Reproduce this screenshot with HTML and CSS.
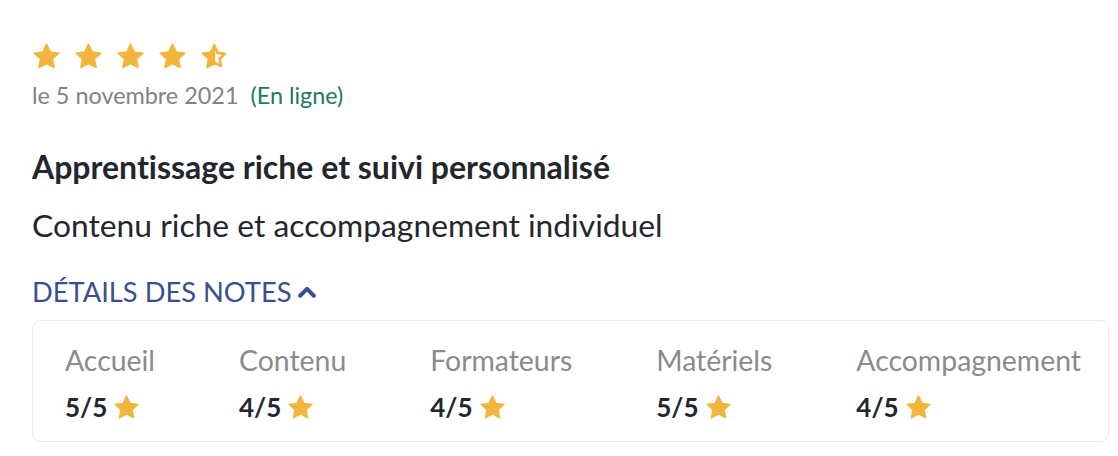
FILE: index.html
```html
<!DOCTYPE html>
<html lang="fr">
<head>
<meta charset="utf-8">
<link rel="stylesheet" href="styles.css">
</head>
<body>
<div class="review">
  <div class="stars">
    <svg class="star" viewBox="0 0 24 24"><path class="full" d="M12 1.8l3.1 6.5 7.1.9-5.2 4.9 1.3 7.1L12 17.8l-6.3 3.4 1.3-7.1L1.8 9.2l7.1-.9z"/></svg>
    <svg class="star" viewBox="0 0 24 24"><path class="full" d="M12 1.8l3.1 6.5 7.1.9-5.2 4.9 1.3 7.1L12 17.8l-6.3 3.4 1.3-7.1L1.8 9.2l7.1-.9z"/></svg>
    <svg class="star" viewBox="0 0 24 24"><path class="full" d="M12 1.8l3.1 6.5 7.1.9-5.2 4.9 1.3 7.1L12 17.8l-6.3 3.4 1.3-7.1L1.8 9.2l7.1-.9z"/></svg>
    <svg class="star" viewBox="0 0 24 24"><path class="full" d="M12 1.8l3.1 6.5 7.1.9-5.2 4.9 1.3 7.1L12 17.8l-6.3 3.4 1.3-7.1L1.8 9.2l7.1-.9z"/></svg>
    <svg class="star" viewBox="0 0 24 24"><path class="outline" d="M12 3.5l2.6 5.5 6 .8-4.4 4.1 1.1 6L12 17l-5.3 2.9 1.1-6L3.4 9.8l6-.8z"/><path class="full" d="M12 1.8v16L5.7 21.2l1.3-7.1L1.8 9.2l7.1-.9z"/></svg>
  </div>
  <div class="meta"><span class="date">le 5 novembre 2021</span><span class="mode">(En ligne)</span></div>
  <h3 class="title">Apprentissage riche et suivi personnalisé</h3>
  <p class="text">Contenu riche et accompagnement individuel</p>
  <div class="toggle">DÉTAILS DES NOTES<svg class="chevron" viewBox="0 0 16 16"><path d="M2.5 11L8 5.5l5.5 5.5"/></svg></div>
  <div class="notes">
    <div class="note"><div class="label">Accueil</div><div class="value">5/5<svg class="mini" viewBox="0 0 24 24"><path d="M12 1.8l3.1 6.5 7.1.9-5.2 4.9 1.3 7.1L12 17.8l-6.3 3.4 1.3-7.1L1.8 9.2l7.1-.9z"/></svg></div></div>
    <div class="note"><div class="label">Contenu</div><div class="value">4/5<svg class="mini" viewBox="0 0 24 24"><path d="M12 1.8l3.1 6.5 7.1.9-5.2 4.9 1.3 7.1L12 17.8l-6.3 3.4 1.3-7.1L1.8 9.2l7.1-.9z"/></svg></div></div>
    <div class="note"><div class="label">Formateurs</div><div class="value">4/5<svg class="mini" viewBox="0 0 24 24"><path d="M12 1.8l3.1 6.5 7.1.9-5.2 4.9 1.3 7.1L12 17.8l-6.3 3.4 1.3-7.1L1.8 9.2l7.1-.9z"/></svg></div></div>
    <div class="note"><div class="label">Matériels</div><div class="value">5/5<svg class="mini" viewBox="0 0 24 24"><path d="M12 1.8l3.1 6.5 7.1.9-5.2 4.9 1.3 7.1L12 17.8l-6.3 3.4 1.3-7.1L1.8 9.2l7.1-.9z"/></svg></div></div>
    <div class="note"><div class="label">Accompagnement</div><div class="value">4/5<svg class="mini" viewBox="0 0 24 24"><path d="M12 1.8l3.1 6.5 7.1.9-5.2 4.9 1.3 7.1L12 17.8l-6.3 3.4 1.3-7.1L1.8 9.2l7.1-.9z"/></svg></div></div>
  </div>
</div>
</body>
</html>
```
FILE: styles.css
```css
html, body { margin: 0; background: #fff; }
body { font-family: Lato, "Liberation Sans", sans-serif; color: #23272d; font-variant-ligatures: no-common-ligatures; }
.review { padding: 41px 9px 0 32px; }
.stars { display: flex; gap: 13px; height: 30px; align-items: center; }
.star { width: 29px; height: 29px; display: block; }
.star .full { fill: #f2b53e; stroke: #f2b53e; stroke-width: 1.2; stroke-linejoin: round; }
.star .outline { fill: none; stroke: #f2b53e; stroke-width: 2.2; stroke-linejoin: round; }
.meta { margin-top: 10px; font-size: 23.4px; line-height: 28px; display: flex; gap: 12px; }
.date { color: #808285; }
.mode { color: #1d7a5b; }
.title { margin: 39px 0 0; font-size: 32px; font-weight: 700; line-height: 38px; }
.text { margin: 20px 0 0; font-size: 31.8px; line-height: 38px; }
.toggle { margin-top: 31px; font-size: 27.3px; line-height: 34px; color: #3a4f8f; display: flex; align-items: center; gap: 5px; }
.chevron { width: 20px; height: 20px; }
.chevron path { fill: none; stroke: #3a4f8f; stroke-width: 3.2; stroke-linecap: round; stroke-linejoin: round; }
.notes { margin-top: 11px; border: 1px solid #ececec; border-radius: 9px; padding: 22px 32px 19px; display: flex; gap: 84px; }
.label { font-size: 28.4px; line-height: 34px; color: #8a8b8c; }
.value { margin-top: 15px; font-size: 26px; line-height: 30px; font-weight: 700; display: flex; align-items: center; gap: 6px; }
.mini { width: 27px; height: 27px; }
.mini path { fill: #f2b53e; stroke: #f2b53e; stroke-width: 1.2; stroke-linejoin: round; }
```
